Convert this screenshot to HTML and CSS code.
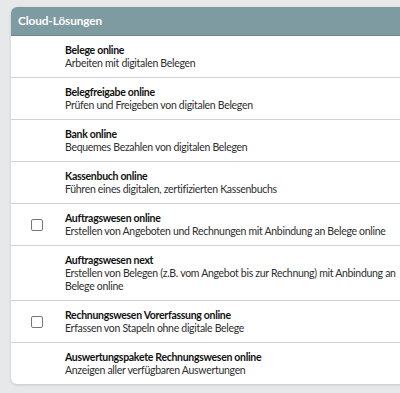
FILE: index.html
```html
<!DOCTYPE html>
<html lang="de">
<head>
    <meta charset="UTF-8">
    <title>Cloud-Lösungen</title>
    <link rel="stylesheet" href="styles.css">
</head>
<body>
    <div class="panel">
        <div class="panel-header">Cloud-Lösungen</div>
        <div class="product">
            <div class="check"></div>
            <div class="info">
                <div class="name">Belege online</div>
                <div class="desc">Arbeiten mit digitalen Belegen</div>
            </div>
        </div>
        <div class="product">
            <div class="check"></div>
            <div class="info">
                <div class="name">Belegfreigabe online</div>
                <div class="desc">Prüfen und Freigeben von digitalen Belegen</div>
            </div>
        </div>
        <div class="product">
            <div class="check"></div>
            <div class="info">
                <div class="name">Bank online</div>
                <div class="desc">Bequemes Bezahlen von digitalen Belegen</div>
            </div>
        </div>
        <div class="product">
            <div class="check"></div>
            <div class="info">
                <div class="name">Kassenbuch online</div>
                <div class="desc">Führen eines digitalen, zertifizierten Kassenbuchs</div>
            </div>
        </div>
        <div class="product">
            <div class="check"><input type="checkbox"></div>
            <div class="info">
                <div class="name">Auftragswesen online</div>
                <div class="desc">Erstellen von Angeboten und Rechnungen mit Anbindung an Belege online</div>
            </div>
        </div>
        <div class="product">
            <div class="check"></div>
            <div class="info">
                <div class="name">Auftragswesen next</div>
                <div class="desc">Erstellen von Belegen (z.B. vom Angebot bis zur Rechnung) mit Anbindung an Belege online</div>
            </div>
        </div>
        <div class="product">
            <div class="check"><input type="checkbox"></div>
            <div class="info">
                <div class="name">Rechnungswesen Vorerfassung online</div>
                <div class="desc">Erfassen von Stapeln ohne digitale Belege</div>
            </div>
        </div>
        <div class="product">
            <div class="check"></div>
            <div class="info">
                <div class="name">Auswertungspakete Rechnungswesen online</div>
                <div class="desc">Anzeigen aller verfügbaren Auswertungen</div>
            </div>
        </div>
    </div>
</body>
</html>
```

FILE: styles.css
```css
body {
    margin: 0;
    padding: 7px 0 0 11px;
    background-color: #e6e8ea;
    font-family: Lato, "Open Sans", sans-serif;
    overflow: hidden;
    height: 393px;
    box-sizing: border-box;
}

.panel {
    width: 420px;
    background-color: #ffffff;
    border-radius: 6px 0 0 6px;
    box-shadow: 0 1px 3px rgba(0, 0, 0, 0.15);
    overflow: hidden;
}

.panel-header {
    height: 28px;
    line-height: 28px;
    padding-left: 7px;
    background-color: #7d9ba1;
    border-bottom: 1px solid #6c8a90;
    color: #ffffff;
    font-weight: 700;
    font-size: 11.8px;
    letter-spacing: -0.1px;
}

.product {
    display: flex;
    align-items: center;
    padding: 8px 0 7px 0;
    border-bottom: 1px solid #d2d2d2;
}

.product:last-child {
    border-bottom: none;
}

.check {
    width: 54px;
    flex-shrink: 0;
    display: flex;
    justify-content: center;
}

.check input {
    width: 12px;
    height: 12px;
    margin: 0 0 0 -2px;
    appearance: none;
    border: 1px solid #767676;
    border-radius: 2px;
    background: #fff;
}

.info {
    width: 335px;
    font-size: 10.5px;
    line-height: 13px;
    letter-spacing: -0.3px;
    color: #2e2e2e;
}

.name {
    font-weight: 700;
    color: #111111;
}
```
